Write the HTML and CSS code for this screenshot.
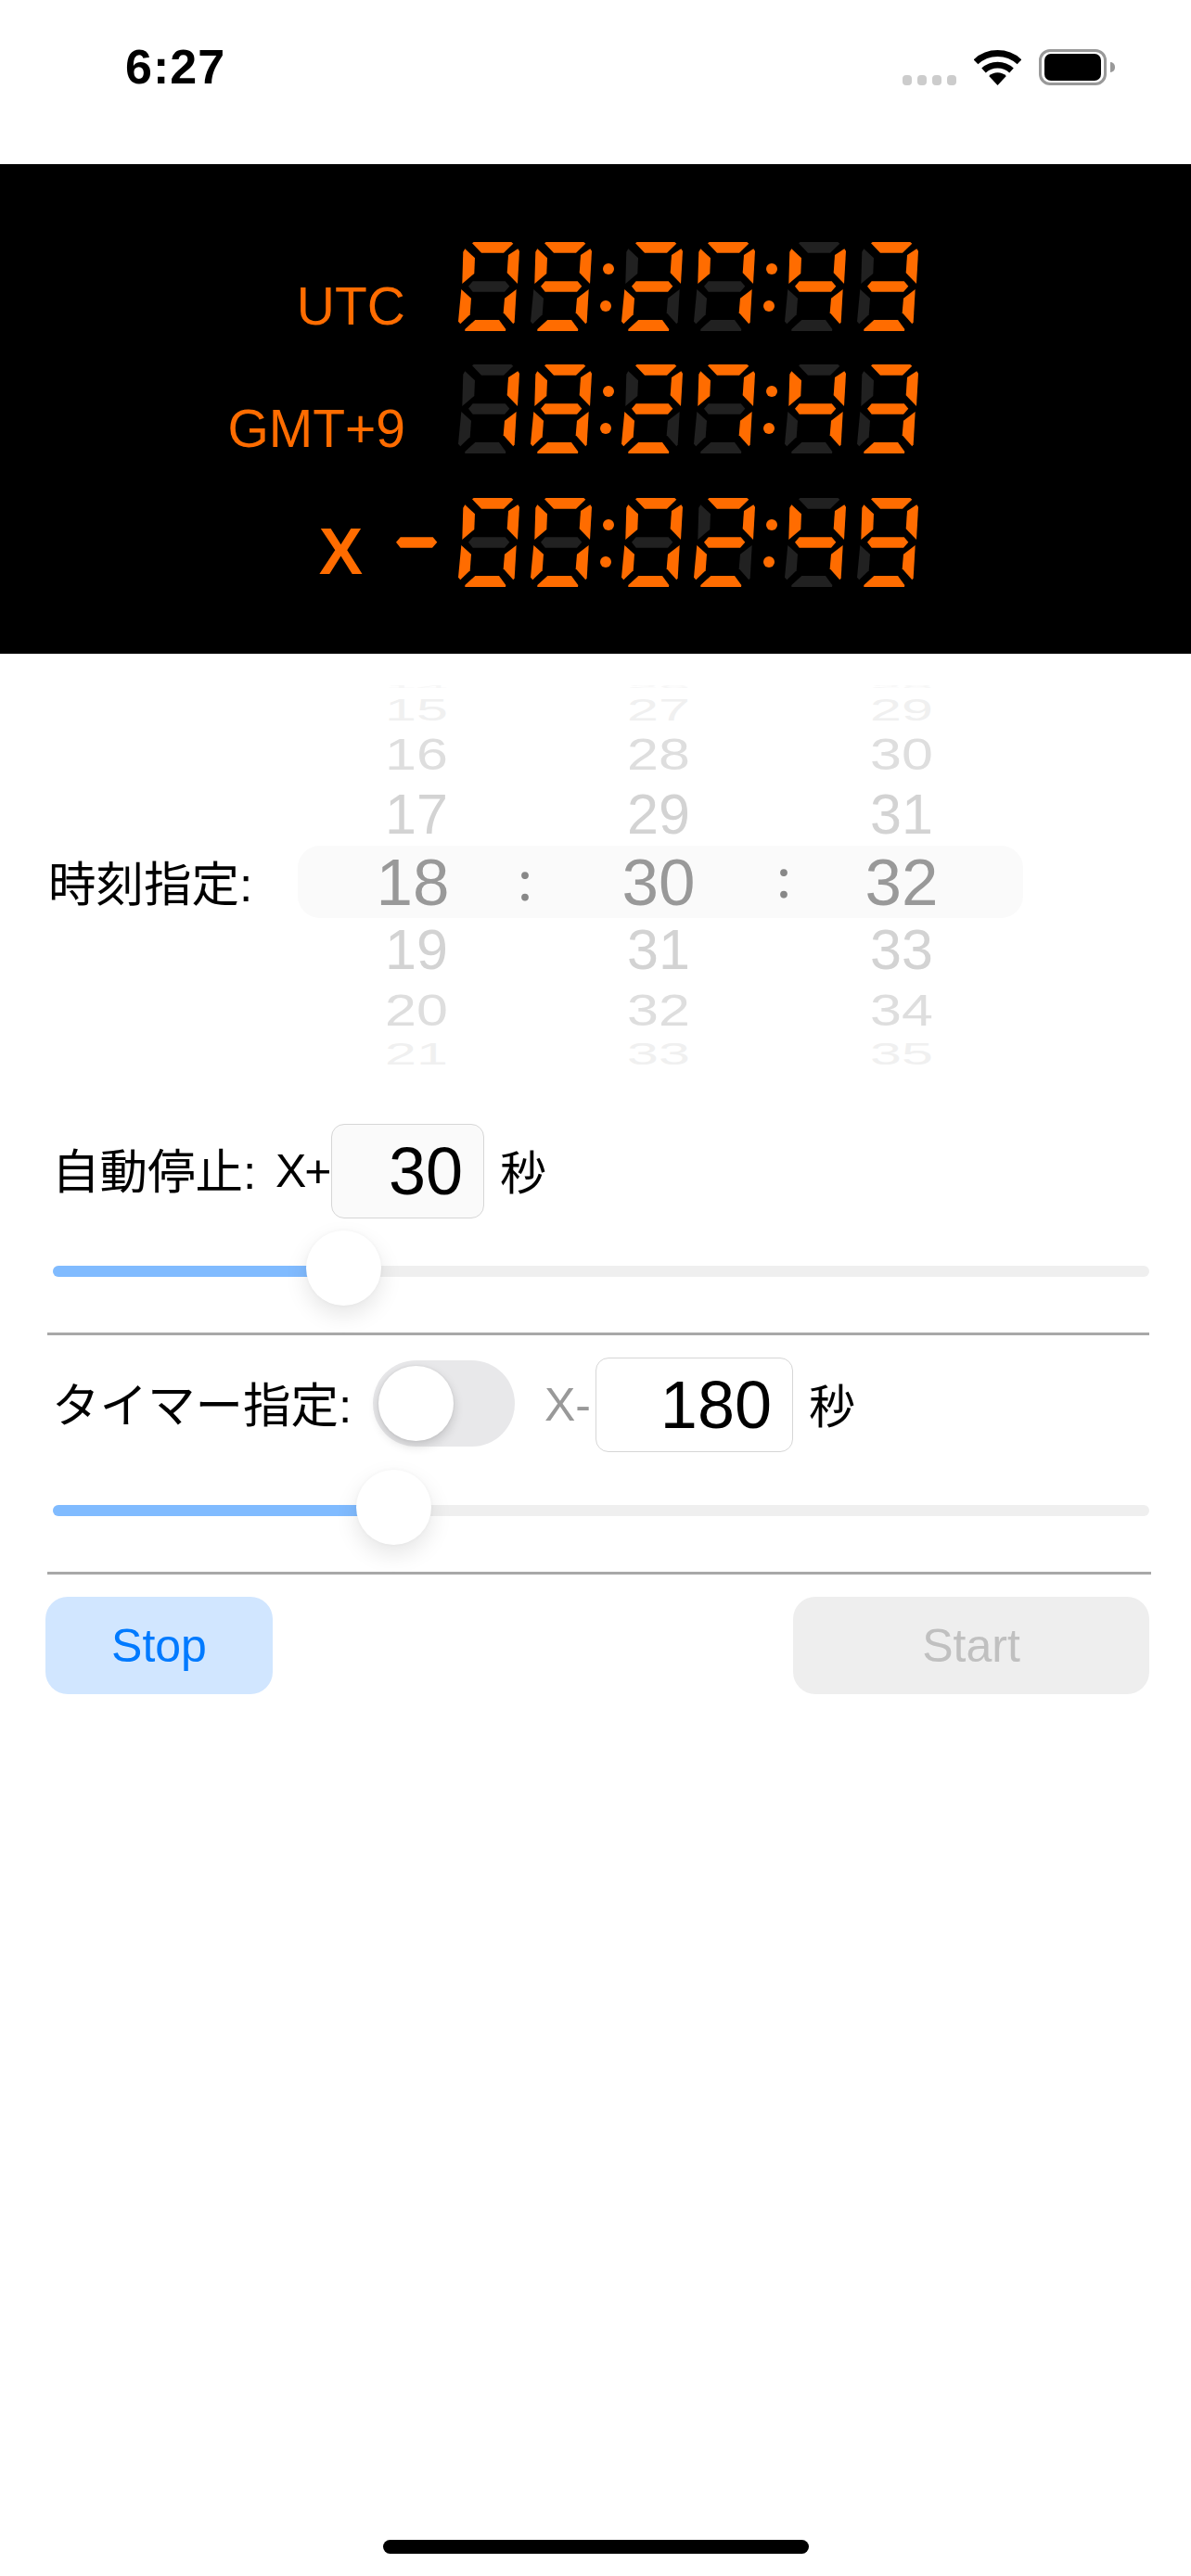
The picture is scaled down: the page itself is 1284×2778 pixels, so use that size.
FILE: index.html
```html
<!DOCTYPE html>
<html lang="ja">
<head>
    <meta charset="UTF-8">
    <meta name="viewport" content="width=device-width, initial-scale=1.0">
    <title>タイマー</title>
    <link rel="stylesheet" href="styles.css">
</head>
<body>
    <div class="status-bar">
        <span class="status-time">6:27</span>
        <div class="status-icons">
            <div class="signal"><i></i><i></i><i></i><i></i></div>
            <svg class="wifi" width="51" height="38" viewBox="0 0 51 38">
                <path d="M2 12.8A34.5 34.5 0 0 1 49 12.8" fill="none" stroke="#000" stroke-width="7"/>
                <path d="M10.5 22A22 22 0 0 1 40.5 22" fill="none" stroke="#000" stroke-width="6.6"/>
                <path d="M25.5 38L16.2 28A13.7 13.7 0 0 1 34.8 28Z" fill="#000"/>
            </svg>
            <div class="battery"><div class="battery-level"></div></div>
            <div class="battery-nub"></div>
        </div>
    </div>

    <div class="lcd">
        <div class="lcd-row">
            <div class="lcd-label">UTC</div>
            <div class="lcd-digits" data-time="09:27:43"></div>
        </div>
        <div class="lcd-row">
            <div class="lcd-label">GMT+9</div>
            <div class="lcd-digits" data-time="18:27:43"></div>
        </div>
        <div class="lcd-row lcd-row-x">
            <div class="lcd-label lcd-x">X</div>
            <svg class="lcd-minus" width="66" height="96" viewBox="0 0 66 96">
                <polygon class="seg-on" points="11,47.7 15.7,42.3 50.7,42.3 55.3,47.7 50,53.7 15.7,53.7"/>
            </svg>
            <div class="lcd-digits" data-time="00:02:49"></div>
        </div>
    </div>

    <div class="picker">
        <div class="picker-label">時刻指定:</div>
        <div class="wheels">
            <div class="wheel-bar"></div>
            <div class="wheel wheel-hour">
                <div class="cell r-edge">14</div>
                <div class="cell r-far-top">15</div>
                <div class="cell r-mid-top">16</div>
                <div class="cell r-near-top">17</div>
                <div class="cell r-sel">18</div>
                <div class="cell r-near-bottom">19</div>
                <div class="cell r-mid-bottom">20</div>
                <div class="cell r-far-bottom">21</div>
            </div>
            <div class="wheel-colon colon-first">:</div>
            <div class="wheel wheel-min">
                <div class="cell r-edge">26</div>
                <div class="cell r-far-top">27</div>
                <div class="cell r-mid-top">28</div>
                <div class="cell r-near-top">29</div>
                <div class="cell r-sel">30</div>
                <div class="cell r-near-bottom">31</div>
                <div class="cell r-mid-bottom">32</div>
                <div class="cell r-far-bottom">33</div>
            </div>
            <div class="wheel-colon colon-second">:</div>
            <div class="wheel wheel-sec">
                <div class="cell r-edge">28</div>
                <div class="cell r-far-top">29</div>
                <div class="cell r-mid-top">30</div>
                <div class="cell r-near-top">31</div>
                <div class="cell r-sel">32</div>
                <div class="cell r-near-bottom">33</div>
                <div class="cell r-mid-bottom">34</div>
                <div class="cell r-far-bottom">35</div>
            </div>
        </div>
    </div>

    <div class="auto-stop">
        <div class="form-row">
            <span class="row-label auto-label">自動停止:</span>
            <span class="prefix plus">X+</span>
            <div class="num-box num-short">30</div>
            <span class="unit">秒</span>
        </div>
        <div class="slider slider-first">
            <div class="slider-fill" style="width: 314px"><div class="slider-thumb"></div></div>
        </div>
        <div class="divider"></div>
    </div>

    <div class="timer">
        <div class="form-row">
            <span class="row-label timer-label">タイマー指定:</span>
            <div class="toggle"><div class="toggle-knob"></div></div>
            <span class="prefix minus">X-</span>
            <div class="num-box num-long">180</div>
            <span class="unit">秒</span>
        </div>
        <div class="slider slider-second">
            <div class="slider-fill" style="width: 368px"><div class="slider-thumb"></div></div>
        </div>
        <div class="divider divider-long"></div>
    </div>

    <div class="buttons">
        <button class="btn btn-stop" type="button">Stop</button>
        <button class="btn btn-start" type="button" disabled>Start</button>
    </div>

    <div class="home-indicator"></div>

    <script src="app.js"></script>
</body>
</html>
```

FILE: styles.css
```css
* {
    box-sizing: border-box;
}
body {
    margin: 0;
    width: 1284px;
    height: 2778px;
    overflow: hidden;
    background: #fff;
    color: #000;
    font-family: "Liberation Sans", "Noto Sans CJK JP", sans-serif;
    font-size: 50px;
}

/* status bar */
.status-bar {
    height: 177px;
    display: flex;
    justify-content: space-between;
    padding: 46px 82px 0 135px;
}
.status-time {
    font-size: 52px;
    font-weight: bold;
    line-height: 52px;
    height: 52px;
    letter-spacing: 1px;
}
.status-icons {
    display: flex;
    align-items: flex-start;
    padding-top: 7px;
}
.signal {
    display: flex;
    gap: 6px;
    margin-top: 28px;
    margin-right: 19px;
}
.signal i {
    width: 10px;
    height: 11px;
    border-radius: 4px;
    background: #ccc;
}
.wifi {
    margin-top: 1px;
    margin-right: 19px;
}
.battery {
    width: 73px;
    height: 39px;
    border: 3px solid #999;
    border-radius: 12px;
    padding: 2px 3px 2px 3px;
}
.battery-level {
    height: 100%;
    background: #000;
    border-radius: 7px;
}
.battery-nub {
    width: 5px;
    height: 11px;
    margin: 14px 0 0 4px;
    background: #999;
    border-radius: 0 5px 5px 0;
}

/* clock panel */
.lcd {
    height: 528px;
    background: #000;
    padding-top: 84px;
}
.lcd-row {
    display: flex;
    align-items: flex-end;
    height: 96px;
    margin-bottom: 36px;
}
.lcd-row-x {
    margin-top: 48px;
}
.lcd-label {
    width: 437px;
    margin-right: 57px;
    margin-bottom: -2px;
    text-align: right;
    color: #ff6c00;
    font-size: 57px;
    line-height: 57px;
}
.lcd-x {
    width: 391px;
    margin-right: 0;
    margin-bottom: 3px;
    font-size: 71px;
    line-height: 71px;
    font-weight: bold;
}
.lcd-minus {
    margin-left: 25px;
    margin-right: 12px;
}
.lcd-digits {
    display: flex;
    gap: 12px;
}
.seg-on {
    fill: #ff6c00;
}
.seg-off {
    fill: #212121;
}
.lcd-colon {
    margin: 0 -12px;
}

/* time picker */
.picker {
    display: flex;
    padding: 35px 0 0 52px;
    height: 453px;
}
.picker-label {
    width: 269px;
    height: 50px;
    line-height: 50px;
    margin-top: 189px;
    white-space: nowrap;
    font-size: 51.5px;
}
.wheels {
    position: relative;
    display: flex;
    width: 782px;
    padding-left: 24px;
}
.wheel-bar {
    position: absolute;
    left: 0;
    top: 172px;
    width: 782px;
    height: 78px;
    background: #fafafa;
    border-radius: 24px;
}
.wheel {
    position: relative;
    text-align: center;
    font-size: 61px;
    color: #d3d3d3;
}
.wheel-hour {
    width: 200px;
}
.wheel-hour .cell {
    padding-left: 8px;
}
.wheel-hour .r-sel {
    padding-left: 0;
}
.wheel-min {
    width: 246px;
}
.wheel-sec {
    width: 230px;
}
.cell {
    display: flex;
    align-items: center;
    justify-content: center;
}
.r-edge {
    height: 2px;
    color: #f6f6f6;
    transform: scaleY(0.06);
}
.r-far-top {
    height: 47px;
    color: #f0f0f0;
    transform: scaleY(0.53);
}
.r-mid-top {
    height: 48px;
    color: #dedede;
    transform: scaleY(0.8);
}
.r-near-top {
    height: 81px;
}
.r-sel {
    height: 67px;
    font-size: 71px;
    color: #999;
}
.r-near-bottom {
    height: 77px;
}
.r-mid-bottom {
    height: 53px;
    color: #dedede;
    transform: scaleY(0.8);
}
.r-far-bottom {
    height: 43px;
    color: #f0f0f0;
    transform: scaleY(0.53);
}
.wheel-colon {
    position: relative;
    text-align: center;
    font-family: Lato, "Liberation Sans", sans-serif;
    font-size: 62px;
    line-height: 62px;
    color: #888;
}
.colon-first {
    width: 42px;
    margin-top: 176px;
}
.colon-second {
    width: 24px;
    margin-top: 173px;
}

/* auto stop and timer rows */
.auto-stop {
    padding-top: 54px;
}
.timer {
    padding-top: 24px;
}
.form-row {
    display: flex;
    align-items: center;
    line-height: 50px;
}
.row-label {
    white-space: nowrap;
    font-size: 51.5px;
    padding-top: 2px;
}
.auto-label {
    width: 241px;
    margin-left: 56px;
}
.timer-label {
    width: 346px;
    margin-left: 56px;
}
.prefix {
    white-space: nowrap;
}
.plus {
    width: 60px;
    letter-spacing: -2px;
}
.minus {
    width: 55px;
    margin-left: 32px;
    color: #999;
}
.num-box {
    height: 102px;
    line-height: 100px;
    font-size: 72px;
    text-align: right;
    padding-right: 22px;
    border: 1.5px solid #d6d6d6;
    border-radius: 14px;
}
.num-short {
    width: 165px;
    background: #fafafa;
}
.num-long {
    width: 213px;
}
.unit {
    margin-left: 17px;
    padding-top: 6px;
}
.toggle {
    position: relative;
    width: 153px;
    height: 93px;
    margin-top: -3px;
    background: #e8e8ea;
    border-radius: 47px;
}
.toggle-knob {
    position: absolute;
    left: 6px;
    top: 6px;
    width: 81px;
    height: 81px;
    background: #fff;
    border-radius: 50%;
    box-shadow: 0 5px 12px rgba(0,0,0,0.16), 0 0 3px rgba(0,0,0,0.08);
}
.slider {
    width: 1182px;
    height: 12px;
    margin-left: 57px;
    background: #efefef;
    border-radius: 6px;
}
.slider-first {
    margin-top: 51px;
}
.slider-second {
    margin-top: 57px;
}
.slider-fill {
    position: relative;
    height: 12px;
    background: #80bbff;
    border-radius: 6px 0 0 6px;
}
.slider-thumb {
    position: absolute;
    top: -38px;
    right: -40px;
    width: 81px;
    height: 81px;
    background: #fff;
    border-radius: 50%;
    box-shadow: 0 10px 24px rgba(0,0,0,0.1), 0 0 4px rgba(0,0,0,0.04);
}
.divider {
    width: 1188px;
    height: 3px;
    margin: 60px 0 0 51px;
    background: #a8a8a8;
}
.divider-long {
    width: 1190px;
}

/* buttons */
.buttons {
    display: flex;
    justify-content: space-between;
    margin: 24px 45px 0 49px;
}
.btn {
    height: 105px;
    padding: 0;
    border: none;
    border-radius: 24px;
    font-family: inherit;
    font-size: 50px;
}
.btn-stop {
    width: 245px;
    background: #d1e6ff;
    color: #007aff;
}
.btn-start {
    width: 384px;
    background: #eee;
    color: #c0c0c0;
}

.home-indicator {
    width: 459px;
    height: 15px;
    margin: 912px 0 0 413px;
    background: #000;
    border-radius: 8px;
}
```

FILE: app.js
```js
// seven segment shapes, in a 66x96 cell
const SEGMENTS = {
    a: '15,1.3 16.7,0 57.3,0 59.3,1.7 49,11.7 25,11.7',
    b: '64.3,7.3 66,9.7 64,45 52.7,33.3 54,14',
    c: '62.7,51 60.7,86.3 59.3,88.3 48.7,76.3 50,60.7',
    d: '7.3,96 7.3,94 18.3,84 44,84 51.3,94 51,96',
    e: '3.3,51 14,60.7 12.7,78.3 2.3,88.3 0,85.7',
    f: '5.3,10.7 7.3,7.3 18,17.3 17.3,34 4.3,45',
    g: '11,47.7 15.7,42.3 50.7,42.3 55.3,47.7 50,53.7 15.7,53.7'
};

const DIGITS = {
    0: 'abcdef',
    1: 'bc',
    2: 'abdeg',
    3: 'abcdg',
    4: 'bcfg',
    7: 'abcf',
    8: 'abcdefg',
    9: 'abcdfg'
};

function digitSvg(ch) {
    const lit = DIGITS[ch];
    let polys = '';
    for (const name in SEGMENTS) {
        const cls = lit.includes(name) ? 'seg-on' : 'seg-off';
        polys += `<polygon class="${cls}" points="${SEGMENTS[name]}"/>`;
    }
    return `<svg width="66" height="96" viewBox="0 0 66 96">${polys}</svg>`;
}

function colonSvg() {
    return `<svg class="lcd-colon" width="32" height="96" viewBox="0 0 32 96">
        <circle class="seg-on" cx="18" cy="29" r="6"/>
        <circle class="seg-on" cx="15" cy="69" r="6"/>
    </svg>`;
}

document.querySelectorAll('.lcd-digits').forEach(function(row) {
    row.innerHTML = row.dataset.time.split('').map(function(ch) {
        return ch === ':' ? colonSvg() : digitSvg(ch);
    }).join('');
});
```
